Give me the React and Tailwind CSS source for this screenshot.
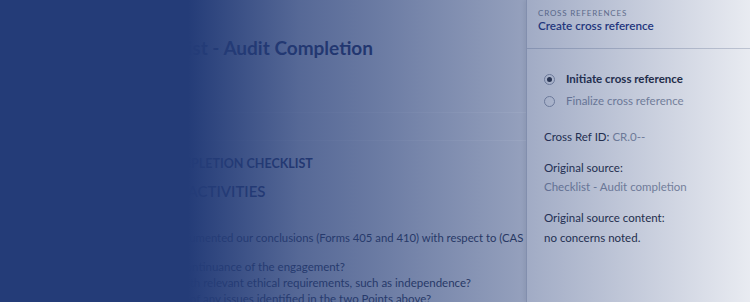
import React from "react";

const Radio = ({ checked }) => (
  <span className="flex h-[11px] w-[11px] items-center justify-center rounded-full border border-[#9aa1b0] bg-white">
    {checked && <span className="h-[5px] w-[5px] rounded-full bg-[#2b2f3a]" />}
  </span>
);

export default function App() {
  return (
    <div className="relative h-[302px] w-[750px] overflow-hidden bg-[#eceef2] font-['Lato',sans-serif]">
      <div className="flex h-full">
        {/* checklist page */}
        <div className="min-w-0 flex-1 overflow-hidden">
          <div className="pl-[130px] pt-[36px]">
            <h1 className="text-[19px] font-bold leading-6 text-[#1c2b5e]">
              Checklist - Audit Completion
            </h1>
          </div>
          <div className="ml-[130px] mt-[52px] border-b border-[#f7f8fa]" />
          <div className="mt-[27px] border-b border-[#f7f8fa]" />
          <div className="pt-[15px] text-[#1c2b5e]">
            <p className="pl-[120px] text-[12.5px] font-bold uppercase leading-4">
              Audit Completion Checklist
            </p>
            <p className="mt-[9px] pl-[139px] text-[15px] font-semibold uppercase leading-5">
              Audit Activities
            </p>
            <div className="mt-[29px] whitespace-nowrap text-[11.5px] leading-4 text-[#2b3450]">
              <p className="pl-[113px] text-[11.3px]">
                1. We have documented our conclusions (Forms 405 and 410) with respect to (CAS 220)
              </p>
              <div className="mt-[13px] leading-[16px]">
                <p className="pl-[86px]">a) Acceptance and continuance of the engagement?</p>
                <p className="pl-[104px]">b) Compliance with relevant ethical requirements, such as independence?</p>
                <p className="pl-[122px]">c) Resolution of any issues identified in the two Points above?</p>
              </div>
            </div>
          </div>
        </div>

        {/* cross reference panel */}
        <aside className="relative z-10 flex w-[224px] shrink-0 flex-col border-l border-[#c9cdd6] bg-white shadow-[-2px_0_4px_rgba(0,0,0,0.08)]">
          <div className="border-b border-[#cfd3dc] px-[11px] pt-[8px] pb-[15px]">
            <p className="text-[8px] uppercase leading-[10px] tracking-[0.1em] text-[#7a8294]">
              Cross references
            </p>
            <p className="text-[11.7px] font-semibold leading-[15px] text-[#23347f]">
              Create cross reference
            </p>
          </div>
          <div className="px-[17px] pt-[22px] text-[11.5px] leading-4">
            <div className="flex flex-col gap-[6px]">
              <label className="flex items-center gap-[11px]">
                <Radio checked />
                <span className="font-bold text-[#23283a]">Initiate cross reference</span>
              </label>
              <label className="flex items-center gap-[11px]">
                <Radio />
                <span className="text-[#8a92a5]">Finalize cross reference</span>
              </label>
            </div>
            <p className="mt-[20px] text-[#23283a]">
              Cross Ref ID: <span className="text-[#8a92a5]">CR.0--</span>
            </p>
            <p className="mt-[15px] text-[#23283a]">Original source:</p>
            <p className="mt-[3px] text-[#8a92a5]">Checklist - Audit completion</p>
            <p className="mt-[15px] text-[#23283a]">Original source content:</p>
            <p className="mt-[4px] text-[#23283a]">no concerns noted.</p>
          </div>
        </aside>
      </div>

      {/* fading overlay */}
      <div className="pointer-events-none absolute inset-0 z-20 bg-[linear-gradient(to_right,rgba(36,60,120,1)_188px,rgba(36,60,120,0.75)_300px,rgba(36,60,120,0.65)_375px,rgba(36,60,120,0.43)_526px,rgba(36,60,120,0.1)_750px)]" />
    </div>
  );
}
